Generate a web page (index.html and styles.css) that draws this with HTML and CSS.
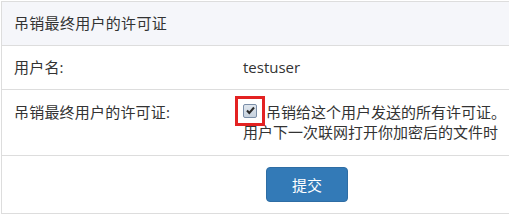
FILE: index.html
```html
<!DOCTYPE html>
<html lang="zh-CN">
<head>
<meta charset="utf-8">
<link rel="stylesheet" href="styles.css">
</head>
<body>
<div class="panel">
  <div class="panel-head">吊销最终用户的许可证</div>
  <div class="row row-user">
    <div class="label">用户名:</div>
    <div class="value">testuser</div>
  </div>
  <div class="row row-revoke">
    <div class="label">吊销最终用户的许可证:</div>
    <div class="value"><span class="line"><span class="check-wrap"><span class="check"><svg width="13" height="13" viewBox="0 0 13 13"><path d="M3 6.5 L5.3 9 L10 3.5" fill="none" stroke="#2b2b2b" stroke-width="2"/></svg></span></span>吊销给这个用户发送的所有许可证。</span><span class="line">用户下一次联网打开你加密后的文件时</span></div>
  </div>
  <div class="row row-submit">
    <div class="label"></div>
    <div class="value"><button class="btn">提交</button></div>
  </div>
</div>
</body>
</html>
```

FILE: styles.css
```css
html, body {
  margin: 0;
  padding: 0;
  background: #fff;
}
body {
  padding: 1px 0 0 1px;
  font-family: "Open Sans", "Noto Sans CJK SC", sans-serif;
  font-size: 15px;
  color: #333;
  overflow: hidden;
}
.panel {
  border-left: 1px solid #ddd;
  border-top: 1px solid #ddd;
}
.panel-head {
  height: 43px;
  line-height: 43px;
  padding-left: 12px;
  background: #f5f6fa;
  border-bottom: 1px solid #ddd;
  color: #333;
  letter-spacing: 0.3px;
}
.row {
  display: flex;
  border-bottom: 1px solid #ddd;
}
.label {
  width: 217px;
  flex: none;
  padding-left: 12px;
  letter-spacing: 0.2px;
}
.value {
  flex: 1;
  min-width: 0;
  padding-left: 12px;
}
.row-user {
  height: 43px;
  line-height: 43px;
}
.row-revoke {
  height: 66px;
  box-sizing: border-box;
  padding-top: 12px;
  line-height: 20px;
}
.line {
  display: block;
  white-space: nowrap;
}
.check-wrap {
  display: inline-block;
  vertical-align: top;
  margin-top: 2px;
  margin-right: 9px;
  outline: 3px solid #e32222;
  outline-offset: 5px;
  width: 14px;
  height: 14px;
}
.check {
  display: block;
  width: 12px;
  height: 12px;
  border: 1px solid #7a8ea8;
  border-radius: 2px;
  background: linear-gradient(#dfe6ee, #c7d2de);
}
.check svg {
  display: block;
  margin: -1px 0 0 0;
}
.row-submit {
  height: 58px;
  box-sizing: border-box;
  padding-top: 11px;
}
.row-submit .value {
  padding-left: 35px;
}
.btn {
  width: 82px;
  height: 35px;
  border: 1px solid #2e6da4;
  border-radius: 4px;
  background: #337ab7;
  color: #fff;
  font-family: "Noto Sans CJK SC", sans-serif;
  font-size: 15px;
  padding: 0;
}
```
